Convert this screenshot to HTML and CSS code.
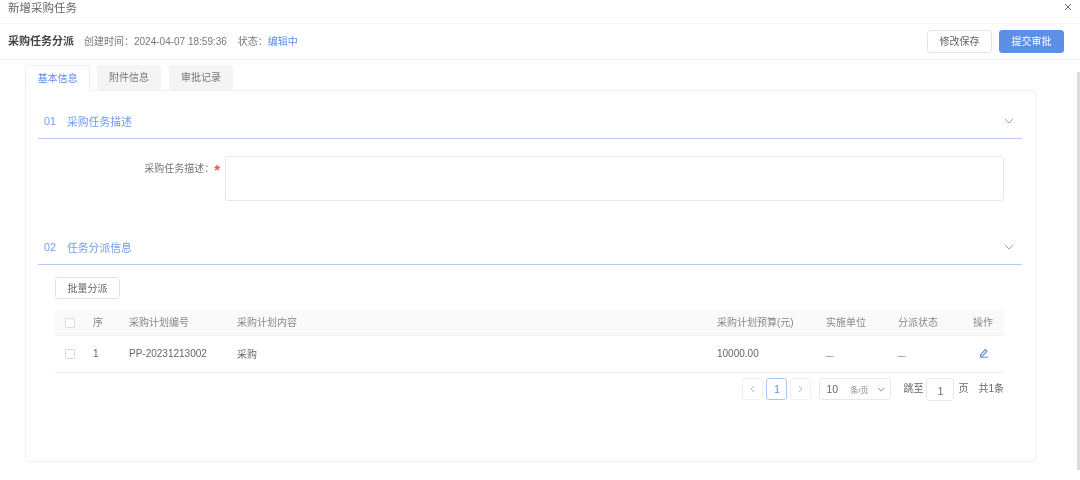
FILE: index.html
```html
<!DOCTYPE html>
<html lang="zh-CN">
<head>
<meta charset="utf-8">
<title>新增采购任务</title>
<link rel="stylesheet" href="styles.css">
</head>
<body>
<div class="dialog">
  <div class="title-bar">
    <span class="title">新增采购任务</span>
    <svg class="close" width="8" height="8" viewBox="0 0 8 8"><path d="M1 1l6 6M7 1l-6 6" stroke="#666" stroke-width="1" fill="none"/></svg>
  </div>
  <div class="head-bar">
    <span class="head-name">采购任务分派</span>
    <span class="head-meta">创建时间：2024-04-07 18:59:36</span>
    <span class="head-meta head-status">状态：<em class="status-val">编辑中</em></span>
    <span class="head-actions">
      <button class="btn btn-save">修改保存</button>
      <button class="btn btn-primary">提交审批</button>
    </span>
  </div>
  <div class="body">
    <div class="main">
      <div class="tabs">
        <div class="tab tab-active">基本信息</div>
        <div class="tab">附件信息</div>
        <div class="tab">审批记录</div>
      </div>
      <div class="panel">
        <div class="section-head">
          <span class="sec-num">01</span><span class="sec-title">采购任务描述</span>
          <svg class="chev" width="10" height="6" viewBox="0 0 10 6"><path d="M1 1l4 4 4-4" stroke="#86a9ea" stroke-width="1" fill="none"/></svg>
        </div>
        <div class="form-row">
          <label class="form-label">采购任务描述：<span class="req">*</span></label>
          <div class="textarea"></div>
        </div>
        <div class="section-head section-second">
          <span class="sec-num">02</span><span class="sec-title">任务分派信息</span>
          <svg class="chev" width="10" height="6" viewBox="0 0 10 6"><path d="M1 1l4 4 4-4" stroke="#86a9ea" stroke-width="1" fill="none"/></svg>
        </div>
        <div class="content">
          <button class="btn btn-batch">批量分派</button>
          <div class="table">
            <div class="tr th">
              <span class="c c-check"><i class="check"></i></span>
              <span class="c c-seq">序</span>
              <span class="c c-code">采购计划编号</span>
              <span class="c c-text">采购计划内容</span>
              <span class="c c-budget">采购计划预算(元)</span>
              <span class="c c-unit">实施单位</span>
              <span class="c c-state">分派状态</span>
              <span class="c c-op">操作</span>
            </div>
            <div class="tr td">
              <span class="c c-check"><i class="check"></i></span>
              <span class="c c-seq">1</span>
              <span class="c c-code">PP-20231213002</span>
              <span class="c c-text">采购</span>
              <span class="c c-budget">10000.00</span>
              <span class="c c-unit"><span class="dash">—</span></span>
              <span class="c c-state"><span class="dash">—</span></span>
              <span class="c c-op"><svg class="edit" width="10" height="10" viewBox="0 0 10 10"><path d="M1.8 6.4L6.3 1.6l1.7 1.6-4.4 4.5-2.2.4zM1 9.3h8" stroke="#5b8fe8" stroke-width="1.1" fill="none"/></svg></span>
            </div>
          </div>
          <div class="pager">
            <span class="pg pg-nav"><svg width="5" height="8" viewBox="0 0 5 8"><path d="M4 1L1 4l3 3" stroke="#bbb" fill="none"/></svg></span>
            <span class="pg pg-cur">1</span>
            <span class="pg pg-nav"><svg width="5" height="8" viewBox="0 0 5 8"><path d="M1 1l3 3-3 3" stroke="#bbb" fill="none"/></svg></span>
            <span class="size"><span class="size-n">10</span><span class="size-u">条/页</span><svg width="9" height="5" viewBox="0 0 9 5"><path d="M1 .7l3.5 3.5L8 .7" stroke="#888" fill="none"/></svg></span>
            <span class="jump">跳至</span>
            <span class="jump-in">1</span>
            <span class="page-word">页</span>
            <span class="total">共1条</span>
          </div>
        </div>
      </div>
    </div>
    <div class="scroll"></div>
  </div>
</div>
</body>
</html>
```

FILE: styles.css
```css
* { box-sizing: border-box; }
html, body { margin: 0; padding: 0; }
body {
  width: 1080px;
  height: 480px;
  overflow: hidden;
  background: #fff;
  font-family: "Liberation Sans", "Noto Sans CJK SC", sans-serif;
  font-size: 10px;
  color: #666;
}
.dialog { display: flex; flex-direction: column; height: 480px; filter: blur(0.3px); }
.title-bar {
  height: 24px;
  flex: none;
  display: flex;
  justify-content: space-between;
  padding: 1px 8px 9px;
  border-bottom: 1px solid #f7f7f7;
}
.title { font-size: 11.5px; line-height: 14px; color: #666; }
.close { margin-top: 2px; }
.head-bar {
  height: 36px;
  flex: none;
  display: flex;
  align-items: center;
  padding: 0 16px 0 8px;
  border-bottom: 1px solid #f2f2f2;
}
.head-name { font-size: 11px; font-weight: bold; color: #444; margin-right: 10px; padding-bottom: 3px; }
.head-meta { color: #777; font-size: 10px; padding-bottom: 2px; }
.head-status { margin-left: 11px; }
.status-val { font-style: normal; color: #5b8fe8; }
.head-actions { margin-left: auto; display: flex; gap: 7px; }
.btn {
  height: 23px;
  width: 65px;
  padding: 0 0 2px;
  border-radius: 3px;
  font: 10px "Liberation Sans", "Noto Sans CJK SC", sans-serif;
  border: 1px solid #e4e4e4;
  background: #fff;
  color: #666;
}
.btn-primary { background: #5b8fe8; border-color: #5b8fe8; color: #fff; }
.body { flex: 1; display: flex; min-height: 0; }
.main { flex: 1; padding: 5px 41px 0 25px; }
.scroll { width: 3px; background: #dcdcdc; margin-top: 12px; margin-bottom: 10px; }
.tabs { display: flex; gap: 8px; height: 26px; }
.tab {
  width: 64px;
  height: 25px;
  line-height: 25px;
  text-align: center;
  background: #f4f4f4;
  border-radius: 3px 3px 0 0;
  color: #777;
}
.tab-active {
  width: 65px;
  margin-right: -1px;
  height: 26px;
  background: #fff;
  color: #5b8fe8;
  border: 1px solid #f0f0f0;
  border-bottom: 0;
  position: relative;
  z-index: 1;
}
.panel {
  margin-top: -1px;
  height: 372px;
  border: 1px solid #f2f2f2;
  border-radius: 0 3px 3px 3px;
  padding: 0 13px 0 12px;
}
.section-head {
  display: flex;
  align-items: center;
  height: 48px;
  padding: 13px 8px 1px 6px;
  border-bottom: 1px solid #b5cdf6;
  color: #6f9dec;
  font-size: 10.8px;
}
.section-second { margin-top: 20px; height: 44px; padding-top: 9px; }
.sec-num { width: 23px; }
.chev { margin-left: auto; }
.form-row { display: flex; margin-top: 17px; padding-right: 18px; height: 45px; }
.form-label { width: 187px; text-align: right; padding-top: 6px; line-height: 14px; color: #777; white-space: nowrap; }
.req { color: #e85a5a; margin-right: 5px; font-size: 15px; font-weight: bold; line-height: 10px; vertical-align: -3px; }
.textarea { flex: 1; border: 1px solid #e6e6e6; border-radius: 3px; }
.content { padding: 12px 18px 0 17px; }
.btn-batch { display: block; height: 22px; }
.table { margin-top: 11px; }
.tr { display: flex; align-items: center; }
.th { height: 26px; background: #fafafa; border-bottom: 1px solid #f3f3f3; color: #888; }
.th .c:not(.c-check) { padding-bottom: 2px; }
.td { height: 37px; border-bottom: 1px solid #f0f0f0; color: #666; }
.td .c:not(.c-check) { padding-bottom: 2px; }
.td .c-text { padding-bottom: 6px; }
.c { display: block; white-space: nowrap; }
.c-check { width: 38px; padding-left: 10px; display: flex; }
.check { display: block; width: 10px; height: 10px; border: 1px solid #dcdcdc; border-radius: 1px; background: #fff; }
.c-seq { width: 36px; }
.c-code { width: 108px; }
.c-text { width: 480px; }
.c-budget { width: 109px; }
.c-unit { width: 72px; }
.c-state { width: 75px; }
.c-op { width: 30px; display: flex; }
.td .c-op { padding-left: 6px; }
.dash { font-size: 8px; color: #555; position: relative; top: 1px; left: -0.5px; }
.pager { display: flex; align-items: flex-start; justify-content: flex-end; margin-top: 5px; height: 23px; }
.pg {
  width: 21px;
  height: 22px;
  border: 1px solid #f0f0f0;
  border-radius: 3px;
  display: flex;
  align-items: center;
  justify-content: center;
  margin-right: 3px;
}
.pg-cur { border-color: #a9c6f5; color: #5b8fe8; }
.size {
  width: 72px;
  height: 22px;
  margin-left: 5px;
  border: 1px solid #e8e8e8;
  border-radius: 3px;
  display: flex;
  align-items: center;
  padding: 0 5px 0 6px;
}
.size-n { width: 25px; font-size: 10.5px; }
.size-u { width: 28px; font-size: 8px; color: #888; }
.jump, .page-word, .total { line-height: 22px; }
.jump { margin-left: 12px; }
.jump-in {
  width: 28px;
  height: 23px;
  margin-left: 3px;
  border: 1px solid #e8e8e8;
  border-radius: 3px;
  text-align: center;
  line-height: 25px;
}
.page-word { margin-left: 4px; }
.total { margin-left: 10px; }
```
